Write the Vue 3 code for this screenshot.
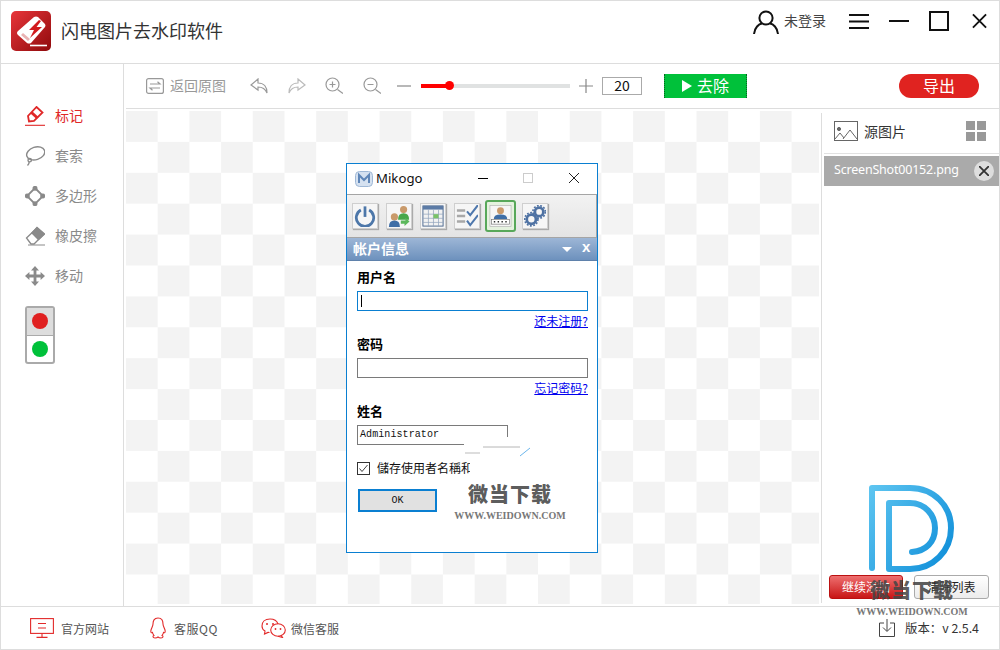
<script setup>
const tools = [
  { id: 'mark', label: '标记', active: true },
  { id: 'lasso', label: '套索' },
  { id: 'poly', label: '多边形' },
  { id: 'erase', label: '橡皮擦' },
  { id: 'move', label: '移动' }
]
</script>

<template>
  <div class="app">
    <header class="header">
      <svg class="logo" viewBox="0 0 40 40">
        <defs>
          <linearGradient id="lg" x1="0" y1="0" x2="1" y2="1">
            <stop offset="0" stop-color="#e8353a" />
            <stop offset="1" stop-color="#8f0a0c" />
          </linearGradient>
        </defs>
        <rect width="40" height="40" rx="5" fill="url(#lg)" />
        <path d="M7 20 L23 6 Q25 5 27 6 L34 13 Q35 15 34 16 L20 32 Q18 33 16 32 L7 24 Q5 22 7 20Z" fill="#fff" />
        <path d="M10 24 L17 30 L19 28 L12 22Z" fill="#e9b3b3" />
        <path d="M28 9 L18 19 L23 19 L19 27 L31 16 L25.5 16 L30 10Z" fill="#d11a1d" />
        <path d="M19 34.5 H36" stroke="#fff" stroke-width="1.6" />
      </svg>
      <div class="app-title">闪电图片去水印软件</div>
      <svg class="user-ic" viewBox="0 0 26 24" fill="none" stroke="#111" stroke-width="2">
        <circle cx="13" cy="8" r="6.6" />
        <path d="M1 24 C1.5 17.5 6 14 9 13.5 M25 24 C24.5 17.5 20 14 17 13.5" />
      </svg>
      <span class="login">未登录</span>
      <svg class="win-ic menu" viewBox="0 0 20 20" stroke="#111" stroke-width="2"><path d="M0 4 H20 M0 10.5 H20 M0 17 H20" /></svg>
      <svg class="win-ic" viewBox="0 0 20 20" stroke="#111" stroke-width="2"><path d="M0 10 H20" /></svg>
      <svg class="win-ic" viewBox="0 0 20 20" fill="none" stroke="#111" stroke-width="2"><rect x="1" y="1" width="18" height="18" /></svg>
      <svg class="win-ic close" viewBox="0 0 16 16" stroke="#111" stroke-width="2"><path d="M1 1 L15 15 M15 1 L1 15" /></svg>
    </header>

    <div class="body">
      <aside class="sidebar">
        <div v-for="t in tools" :key="t.id" class="tool" :class="{ active: t.active }">
          <svg class="tool-ic" viewBox="0 0 20 20" fill="none" stroke="currentColor" stroke-width="1.4">
            <template v-if="t.id === 'mark'">
              <path d="M11.5 1 L17.5 6.5 L9 15 L4 15.5 L3 10Z" stroke-width="1.8" />
              <path d="M6.5 6.5 L12.5 12" stroke-width="3" />
              <path d="M0 19.3 H20" stroke-width="1.1" />
            </template>
            <template v-else-if="t.id === 'lasso'">
              <ellipse cx="10.7" cy="7.4" rx="9.3" ry="6.3" transform="rotate(-18 10.7 7.4)" />
              <circle cx="4.7" cy="14.2" r="1.7" />
              <path d="M4.2 15.8 Q4.2 18 2.5 19.5" />
            </template>
            <template v-else-if="t.id === 'poly'">
              <path d="M10 2 L18 10 L10 18 L2 10Z" stroke-width="1.8" />
              <circle cx="10" cy="2.3" r="1.8" fill="currentColor" />
              <circle cx="17.7" cy="10" r="1.8" fill="currentColor" />
              <circle cx="10" cy="17.7" r="1.8" fill="currentColor" />
              <circle cx="2.3" cy="10" r="1.8" fill="currentColor" />
            </template>
            <template v-else-if="t.id === 'erase'">
              <path d="M1.5 12 L12 2 L19 8 L9 18 L6 18Z" stroke-width="1.3" />
              <path d="M7 7 L12 1.5 L19.5 8 L13.5 13.5Z" fill="currentColor" />
              <path d="M3 19 H20" stroke-width="1" />
            </template>
            <template v-else>
              <path d="M10 2 V18 M2 10 H18" stroke-width="2.8" />
              <path d="M10 0 L14 4.4 H6Z M10 20 L14 15.6 H6Z M0 10 L4.4 6 V14Z M20 10 L15.6 6 V14Z" fill="currentColor" stroke="none" />
            </template>
          </svg>
          <span class="lift">{{ t.label }}</span>
        </div>
        <div class="lights">
          <div class="light on"><i class="dot red"></i></div>
          <div class="light"><i class="dot green"></i></div>
        </div>
      </aside>

      <div class="main">
        <div class="toolbar">
          <svg class="tb-ic back" viewBox="0 0 18 16" fill="none" stroke="#999" stroke-width="1.2">
            <rect x="0.6" y="0.6" width="16.8" height="14.8" rx="2" />
            <path d="M4 6 H14 L11.5 3.8 M14 10 H4 L6.5 12.2" />
          </svg>
          <span class="back-text">返回原图</span>
          <svg class="tb-ic undo" viewBox="0 0 18 16" fill="none" stroke="#999" stroke-width="1.2">
            <path d="M8 1 L1 7 L8 12 V9 C12 9 15 10 17 15 C17 9 14 5 8 5Z" />
          </svg>
          <svg class="tb-ic redo" viewBox="0 0 18 16" fill="none" stroke="#bbb" stroke-width="1.2">
            <path d="M10 1 L17 7 L10 12 V9 C6 9 3 10 1 15 C1 9 4 5 10 5Z" />
          </svg>
          <svg class="tb-ic zoomp" viewBox="0 0 18 18" fill="none" stroke="#999" stroke-width="1.2">
            <circle cx="7.5" cy="7.5" r="6.5" /><path d="M4.5 7.5 H10.5 M7.5 4.5 V10.5 M12.5 12.5 L18 16.5" />
          </svg>
          <svg class="tb-ic zoomm" viewBox="0 0 18 18" fill="none" stroke="#999" stroke-width="1.2">
            <circle cx="7.5" cy="7.5" r="6.5" /><path d="M4.5 7.5 H10.5 M12.5 12.5 L18 16.5" />
          </svg>
          <svg class="tb-ic minus" viewBox="0 0 14 14" stroke="#888" stroke-width="1.2"><path d="M0 7 H14" /></svg>
          <div class="slider"><div class="fill"></div><div class="knob"></div></div>
          <svg class="tb-ic plus" viewBox="0 0 14 14" stroke="#888" stroke-width="1.2"><path d="M0 7 H14 M7 0 V14" /></svg>
          <div class="num">20</div>
          <div class="go"><i class="tri"></i><span class="lift">去除</span></div>
          <div class="export">导出</div>
        </div>

        <div class="content">
          <div class="canvas">
            <div class="dialog">
              <div class="d-title">
                <svg class="m-ic" viewBox="0 0 18 16">
                  <rect x="0.5" y="0.5" width="17" height="15" rx="4" fill="#d5e1f0" stroke="#9fb8d6" />
                  <path d="M4 12 V4 L9 9 L14 4 V12" fill="none" stroke="#5f86b8" stroke-width="2" />
                </svg>
                <span class="m-name lift">Mikogo</span>
                <svg class="d-btn min" viewBox="0 0 10 10" stroke="#000"><path d="M0 5.5 H10" /></svg>
                <svg class="d-btn max" viewBox="0 0 10 10" fill="none" stroke="#ccc"><rect x="0.5" y="0.5" width="9" height="9" /></svg>
                <svg class="d-btn cls" viewBox="0 0 10 10" stroke="#222"><path d="M0 0 L10 10 M10 0 L0 10" /></svg>
              </div>

              <div class="d-tools">
                <div class="d-tool">
                  <svg viewBox="0 0 24 24" fill="none" stroke="#4d77a9" stroke-width="3">
                    <path d="M7.5 5.5 A9.5 9.5 0 1 0 16.5 5.5" /><path d="M12 1.5 V13" />
                  </svg>
                </div>
                <div class="d-tool">
                  <svg viewBox="0 0 24 24">
                    <circle cx="17" cy="5" r="3.9" fill="#c99a6b" /><path d="M11 16 Q11 9 17 9 Q23 9 23 16Z" fill="#48a84a" />
                    <circle cx="7" cy="13" r="3.9" fill="#c99a6b" /><path d="M1 24 Q1 17 7 17 Q13 17 13 24Z" fill="#3f6ea6" />
                    <path d="M14 17 L19 17 L19 14 L23.5 18 L18 23 L18 20.5 L14 20.5Z" fill="#5cb85c" />
                  </svg>
                </div>
                <div class="d-tool">
                  <svg viewBox="0 0 24 24">
                    <rect x="1" y="1" width="22" height="22" fill="#f2f2f2" stroke="#45628a" />
                    <rect x="1" y="1" width="22" height="4" fill="#5c7ba6" />
                    <path d="M1 10 H23 M1 14.5 H23 M1 19 H23 M7 5 V23 M12.5 5 V23 M18 5 V23" stroke="#93a5bd" stroke-width="0.8" />
                    <rect x="12.5" y="10" width="5.5" height="4.5" fill="#79c267" />
                  </svg>
                </div>
                <div class="d-tool">
                  <svg viewBox="0 0 24 24" fill="none">
                    <path d="M1 6 H10 M1 12 H10 M1 18 H10" stroke="#a8a8a8" stroke-width="2.6" />
                    <path d="M12 7 L15.5 11 L24 0 M12 17 L15.5 22 L24 11" stroke="#4f78ad" stroke-width="2.2" />
                  </svg>
                </div>
                <div class="d-tool sel">
                  <svg viewBox="0 0 24 24">
                    <rect x="1" y="1" width="22" height="22" fill="#f6f6f6" stroke="#aaa" stroke-width="0.6" />
                    <circle cx="12" cy="6.5" r="3.6" fill="#c99a6b" /><path d="M5 15 Q5 10.5 12 10.5 Q19 10.5 19 15Z" fill="#3f6ea6" />
                    <rect x="2.5" y="15.5" width="19" height="5" fill="#fff" stroke="#777" stroke-width="0.7" />
                    <path d="M5 18 H6.5 M9 18 H10.5 M13 18 H14.5 M17 18 H18.5" stroke="#333" stroke-width="1.5" />
                  </svg>
                </div>
                <div class="d-tool">
                  <svg viewBox="0 0 24 24" fill="none" stroke="#4f72a3">
                    <circle cx="16.5" cy="7.5" r="4.6" stroke-width="3" />
                    <circle cx="16.5" cy="7.5" r="6.8" stroke-width="1.8" stroke-dasharray="2 1.6" />
                    <circle cx="8" cy="15.5" r="5" stroke-width="3" />
                    <circle cx="8" cy="15.5" r="7.2" stroke-width="1.8" stroke-dasharray="2 1.6" />
                  </svg>
                </div>
              </div>

              <div class="d-band">
                <span class="lift">帐户信息</span>
                <i class="band-tri"></i>
                <b class="band-x">x</b>
              </div>

              <div class="d-form">
                <div class="f-label">用户名</div>
                <div class="f-input focus"><i class="caret"></i></div>
                <a class="f-link">还未注册?</a>
                <div class="f-label">密码</div>
                <div class="f-input"></div>
                <a class="f-link">忘记密码?</a>
                <div class="f-label">姓名</div>
                <div class="f-input short">Administrator</div>
                <label class="f-check">
                  <svg class="cb" viewBox="0 0 13 13" fill="none">
                    <rect x="0.5" y="0.5" width="12" height="12" stroke="#333" />
                    <path d="M2.5 6.5 L5 9.5 L10.5 3" stroke="#444" />
                  </svg>
                  <span class="lift">儲存使用者名稱和</span>
                </label>
                <div class="f-ok">OK</div>
              </div>
              <svg class="patch" viewBox="0 0 70 42">
                <path d="M0 0 H70 V42 H6 V24 H0Z" fill="#fff" />
                <path d="M19 10 H56" stroke="#888" stroke-width="1" opacity="0.6" />
                <path d="M1 16 H16" stroke="#bbb" stroke-width="1" />
                <path d="M56 19 L66 11" stroke="#6bb6ec" stroke-width="1" />
              </svg>
            </div>
          </div>

          <div class="divider"></div>

          <aside class="panel">
            <div class="p-head">
              <svg class="pic" viewBox="0 0 24 20" fill="none" stroke="#666" stroke-width="1">
                <rect x="0.5" y="0.5" width="23" height="19" />
                <circle cx="5" cy="8" r="1.6" fill="#666" />
                <path d="M1 18 L6 12 L10 17 M9 18 L16 9 L23 18" />
              </svg>
              <span>源图片</span>
              <div class="grid-ic"><i></i><i></i><i></i><i></i></div>
            </div>
            <div class="p-item">
              <span class="lift-2">ScreenShot00152.png</span>
              <div class="p-x">
                <svg viewBox="0 0 10 10" stroke="#333" stroke-width="1.8"><path d="M0 0 L10 10 M10 0 L0 10" /></svg>
              </div>
            </div>
            <div class="p-btns">
              <div class="btn-red">继续添加</div>
              <div class="btn-gray">清除列表</div>
            </div>
          </aside>
        </div>
      </div>
    </div>

    <footer class="footer">
      <div class="f-item site">
        <svg class="f-ic" viewBox="0 0 24 20" fill="none" stroke="#e22a2a" stroke-width="1.1">
          <rect x="0.6" y="0.6" width="22.8" height="14.8" />
          <path d="M8 5.5 H16 M8 10 H16 M12 15.5 V19 M6.5 19.4 H17.5" />
        </svg>
        <span>官方网站</span>
      </div>
      <div class="f-item qq">
        <svg class="f-ic qqic" viewBox="0 0 16 22" fill="none" stroke="#e22a2a" stroke-width="1.1">
          <path d="M8 1 C4 1 3 4 3 7 C3 9 2 10 1 13 C0.5 15 1 16.5 2.5 15.5 C2.8 17 3.5 17.8 4 18.5 C2.5 19 2.5 21 5 21 C6.5 21 7.5 20.5 8 20 C8.5 20.5 9.5 21 11 21 C13.5 21 13.5 19 12 18.5 C12.5 17.8 13.2 17 13.5 15.5 C15 16.5 15.5 15 15 13 C14 10 13 9 13 7 C13 4 12 1 8 1Z" />
        </svg>
        <span class="qq-text">客服QQ</span>
      </div>
      <div class="f-item wx">
        <svg class="f-ic wxic" viewBox="0 0 25 20" fill="none" stroke="#e22a2a" stroke-width="1.1">
          <path d="M9 1 C4 1 1 4 1 8 C1 10 2 12 4 13 L3.5 16 L7 14.4 C7.5 14.5 8 14.5 8.5 14.5" />
          <path d="M9 1 C13 1 16 3 17 6" />
          <circle cx="6" cy="6" r="1" fill="#e22a2a" stroke="none" />
          <circle cx="12" cy="6" r="1" fill="#e22a2a" stroke="none" />
          <ellipse cx="17" cy="12" rx="7.3" ry="6.3" />
          <path d="M20 17 L21.5 19.5 L17 18.3" />
          <circle cx="14.5" cy="11" r="0.9" fill="#e22a2a" stroke="none" />
          <circle cx="19.5" cy="11" r="0.9" fill="#e22a2a" stroke="none" />
        </svg>
        <span>微信客服</span>
      </div>
      <div class="version">
        <svg class="dl" viewBox="0 0 16 18" fill="none" stroke="#444" stroke-width="1">
          <path d="M5 4 H0.5 V17.5 H15.5 V4 H11" />
          <path d="M8 0 V12 M4 8.5 L8 12.5 L12 8.5" />
        </svg>
        <span>版本：v 2.5.4</span>
      </div>
    </footer>

    <svg class="d-logo" viewBox="0 0 92 96" fill="none" stroke="url(#dg)" stroke-width="6" stroke-linecap="round" stroke-linejoin="round">
      <defs>
        <linearGradient id="dg" gradientUnits="userSpaceOnUse" x1="0" y1="0" x2="92" y2="60">
          <stop offset="0" stop-color="#62c8f2" />
          <stop offset="1" stop-color="#1391da" />
        </linearGradient>
      </defs>
      <path d="M6 86 V6 H44 C68 6 85 24 85 46 C85 69 67 87 44 87 H23 V21 H44 C59 21 69 33 69 46 C69 60 60 69 46 70" />
    </svg>
    <div class="wm wm1"><b>微当下载</b><em>WWW.WEIDOWN.COM</em></div>
    <div class="wm wm2"><b>微当下载</b><em>WWW.WEIDOWN.COM</em></div>
  </div>
</template>

<style scoped>
.app {
  position: relative;
  width: 1000px;
  height: 650px;
  box-sizing: border-box;
  border: 1px solid #ddd;
  display: flex;
  flex-direction: column;
  overflow: hidden;
  background: #fff;
  font-family: "Noto Sans CJK SC", "Liberation Sans", sans-serif;
  color: #333;
}
.lift { padding-bottom: 2px; }
.lift-2 { padding-bottom: 3px; }
.header {
  height: 63px;
  flex: none;
  box-sizing: border-box;
  border-bottom: 1px solid #ddd;
  display: flex;
  align-items: flex-start;
  padding: 10px 12px 0 10px;
}
.logo { width: 40px; height: 40px; flex: none; }
.app-title { margin: 7px 0 0 10px; font-size: 18px; line-height: 24px; color: #333; flex: 1; white-space: nowrap; }
.user-ic { width: 26px; height: 24px; margin-top: -1px; flex: none; }
.login { font-size: 14px; line-height: 18px; margin: 0 23px 0 5px; color: #444; white-space: nowrap; }
.win-ic { width: 20px; height: 20px; margin: 0 20px 0 0; flex: none; }
.close { width: 15px; height: 16px; margin: 2px 0 0 3px; }

.body { flex: 1; min-height: 0; display: flex; }
.sidebar {
  width: 123px;
  flex: none;
  box-sizing: border-box;
  border-right: 1px solid #ddd;
  padding: 32px 0 0 24px;
}
.tool {
  height: 40px;
  display: flex;
  align-items: center;
  font-size: 14px;
  color: #8a8a8a;
}
.tool.active { color: #e02828; }
.tool-ic { width: 20px; height: 20px; margin-right: 10px; flex: none; }
.lights {
  width: 30px;
  height: 58px;
  box-sizing: border-box;
  margin-top: 10px;
  border: 2px solid #aaa;
  border-radius: 3px;
  display: flex;
  flex-direction: column;
}
.light { flex: 1; display: flex; align-items: center; justify-content: center; }
.light.on { background: #ddd; border-bottom: 1px solid #aaa; }
.dot { width: 16px; height: 16px; border-radius: 50%; display: block; }
.dot.red { background: #e02020; }
.dot.green { background: #00c13a; }

.main { flex: 1; min-width: 0; display: flex; flex-direction: column; }
.toolbar {
  height: 45px;
  flex: none;
  box-sizing: border-box;
  margin-left: 2px;
  border-bottom: 1px solid #ddd;
  display: flex;
  align-items: center;
  padding: 0 20px 1px 20px;
}
.tb-ic { flex: none; }
.back { width: 18px; height: 16px; }
.back-text { font-size: 14px; color: #999; margin: 0 24px 0 6px; padding-bottom: 2px; white-space: nowrap; }
.undo, .redo { width: 18px; height: 16px; }
.undo { margin-right: 20px; }
.redo { margin-right: 19px; }
.zoomp, .zoomm { width: 18px; height: 18px; }
.zoomp { margin-right: 20px; }
.zoomm { margin-right: 16px; }
.minus { width: 14px; height: 14px; margin-right: 10px; }
.slider { position: relative; width: 149px; height: 4px; background: #e0e2e2; flex: none; }
.fill { width: 28px; height: 4px; background: #f00; }
.knob { position: absolute; left: 24px; top: -2.5px; width: 9px; height: 9px; border-radius: 50%; background: #f00; }
.plus { width: 14px; height: 14px; margin: 0 9px; }
.num {
  width: 40px; height: 18px; box-sizing: border-box; border: 1px solid #aaa;
  font-size: 14px; line-height: 15px; text-align: center; color: #111;
  margin-right: 22px;
}
.go {
  width: 83px; height: 24px; background: #00c13a; color: #fff; font-size: 16px; line-height: 22px;
  box-sizing: border-box; border-left: 1px dotted #07611f; border-right: 1px dotted #07611f;
  display: flex; align-items: center; justify-content: center; flex: none;
}
.tri {
  width: 0; height: 0; margin-right: 5px;
  border-left: 10px solid #fff; border-top: 6.5px solid transparent; border-bottom: 6.5px solid transparent;
}
.export {
  margin-left: auto; width: 80px; height: 24px; border-radius: 12px; background: #e02320; color: #fff;
  font-size: 16px; line-height: 22px; text-align: center; flex: none;
}

.content { flex: 1; min-height: 0; display: flex; }
.canvas {
  width: 693px;
  height: 493px;
  margin: 2px 0 0 2px;
  flex: none;
  position: relative;
  background: conic-gradient(#fff 25%, #f3f3f3 0 50%, #fff 0 75%, #f3f3f3 0) 0 0 / 63.4px 61.8px;
}
.divider { width: 1px; background: #ddd; margin: 4px 0 3px 2px; flex: none; }

.dialog {
  position: absolute;
  left: 220px;
  top: 52px;
  width: 252px;
  height: 390px;
  box-sizing: border-box;
  border: 1px solid #0a7fd1;
  background: #fff;
  display: flex;
  flex-direction: column;
}
.d-title { height: 30px; flex: none; display: flex; align-items: center; padding-left: 8px; position: relative; }
.m-ic { width: 18px; height: 16px; flex: none; }
.m-name { font-size: 13.2px; margin-left: 3px; color: #111; font-family: "Noto Sans", "Liberation Sans", sans-serif; }
.d-btn { position: absolute; width: 10px; height: 10px; top: 9px; }
.min { left: 131px; }
.max { left: 176px; }
.cls { left: 222px; }
.d-tools {
  height: 44px; flex: none; box-sizing: border-box;
  background: linear-gradient(#f2f2f2, #e4e4e4);
  border-top: 1px solid #a5a5a5; border-bottom: 1px solid #a5a5a5;
  border-right: 1px solid #a5a5a5;
  display: flex; align-items: center; padding-left: 5px;
}
.d-tool {
  width: 26px; height: 26px; box-sizing: border-box; margin-right: 8px; padding: 1px;
  background: #f6f6f6; border: 1px solid #cfcfcf; box-shadow: 1px 1px 1px #aaa; flex: none;
}
.d-tool svg { display: block; width: 22px; height: 22px; }
.d-tool.sel { width: 31px; height: 32px; border: 2px solid #58a85a; border-radius: 3px; padding: 2px; margin: 0 6px 0 -3px; background: #e5f2df; box-shadow: none; }
.d-tool.sel svg { width: 23px; height: 24px; }
.d-band {
  height: 23px; flex: none; box-sizing: border-box;
  background: linear-gradient(#9db6d6, #6d91bd);
  border-bottom: 1px solid #5f81ab;
  color: #fff; font-size: 14px; font-weight: 700; line-height: 19px;
  display: flex; align-items: center; padding-left: 6px; position: relative;
}
.band-tri {
  position: absolute; left: 215px; top: 9px; width: 0; height: 0;
  border-top: 5px solid #fff; border-left: 5px solid transparent; border-right: 5px solid transparent;
}
.band-x { position: absolute; left: 235px; top: -1px; font-size: 15px; font-family: "Liberation Sans", sans-serif; }
.d-form { padding: 0 9px 0 10px; display: flex; flex-direction: column; }
.f-label { font-size: 13px; font-weight: 700; line-height: 14px; color: #000; margin: 9px 0 2px; }
.f-input {
  height: 20px; box-sizing: border-box; border: 1px solid #7a7a7a; margin-top: 5px;
  font-family: "Liberation Mono", monospace; font-size: 10px; line-height: 18px; padding-left: 2px; color: #111;
  position: relative;
}
.f-input.focus { border-color: #0a7fd1; }
.caret { position: absolute; left: 3px; top: 3px; width: 1px; height: 12px; background: #000; }
.f-input.short { width: 151px; letter-spacing: 0.08px; }
.f-link { font-size: 12px; line-height: 14px; height: 14px; color: #00e; text-decoration: underline; text-align: right; margin-top: 3px; }
.f-check { display: flex; align-items: center; margin-top: 17px; font-size: 12px; color: #111; white-space: nowrap; line-height: 13px; height: 13px; }
.cb { width: 13px; height: 13px; flex: none; margin-right: 7px; }
.f-ok {
  width: 79px; height: 23px; box-sizing: border-box; border: 2px solid #0a7fd1; background: #e1e1e1; margin: 14px 0 0 1px;
  font-family: "Liberation Mono", monospace; font-size: 10px; line-height: 19px; text-align: center; color: #111;
}
.patch { position: absolute; left: 117px; top: 273px; width: 70px; height: 42px; }

.panel { flex: 1; min-width: 0; display: flex; flex-direction: column; padding: 0 0 0 2px; }
.p-head {
  height: 45px; flex: none; box-sizing: border-box; border-bottom: 1px solid #e2e2e2;
  display: flex; align-items: center; padding: 0 13px 0 10px; font-size: 14px; color: #333;
}
.pic { width: 24px; height: 20px; margin-right: 6px; }
.grid-ic { margin-left: auto; display: grid; grid-template-columns: 9px 9px; grid-template-rows: 9px 9px; gap: 2px; }
.grid-ic i { background: #999; display: block; }
.p-item {
  height: 30px; margin-top: 2px; background: #aaa; color: #fff; font-size: 12.5px; flex: none;
  display: flex; align-items: center; padding-left: 10px;
  font-family: "Noto Sans", "Liberation Sans", sans-serif;
  letter-spacing: -0.2px;
}
.p-x {
  margin-left: auto; margin-right: 5px; width: 20px; height: 20px; border-radius: 50%; background: #ddd;
  display: flex; align-items: center; justify-content: center;
}
.p-x svg { width: 10px; height: 10px; }
.p-btns { margin-top: auto; margin-bottom: 7px; display: flex; gap: 11px; padding-left: 5px; }
.btn-red, .btn-gray { height: 24px; width: 74px; box-sizing: border-box; border-radius: 3px; font-size: 12px; line-height: 22px; text-align: center; }
.btn-red { background: linear-gradient(#ee6f6f, #c81616); border: 1px solid #b11; color: #fff; }
.btn-gray { width: 75px; background: linear-gradient(#fff, #ececec); border: 1px solid #aaa; color: #222; }

.footer {
  height: 43px; flex: none; box-sizing: border-box; border-top: 1px solid #ddd;
  display: flex; align-items: center; font-size: 12px; color: #555;
  padding-left: 29px;
}
.f-item { display: flex; align-items: center; white-space: nowrap; flex: none; }
.f-ic { width: 24px; height: 20px; margin-right: 7px; }
.site { width: 120px; }
.qq { width: 111px; }
.qqic { width: 16px; height: 22px; margin-right: 8px; }
.qq-text { letter-spacing: 0.5px; }
.wxic { width: 25px; height: 20px; margin-right: 5px; }
.version { margin-left: auto; margin-right: 20px; display: flex; align-items: center; color: #333; font-size: 12.4px; }
.dl { width: 16px; height: 18px; margin-right: 10px; }

.d-logo { position: absolute; left: 865px; top: 481px; width: 92px; height: 96px; }
.wm { position: absolute; display: flex; flex-direction: column; align-items: center; width: 120px; pointer-events: none; }
.wm b { font-size: 20px; line-height: 24px; font-weight: 900; color: rgba(70,70,70,0.9); letter-spacing: 1px; }
.wm em { font-family: "Liberation Serif", serif; font-style: normal; font-weight: 700; font-size: 10px; line-height: 12px; color: #777; margin-top: 4px; white-space: nowrap; }
.wm1 { left: 449px; top: 481px; }
.wm2 { left: 851px; top: 577px; }
</style>

<style>
html, body { margin: 0; background: #fff; }
</style>
